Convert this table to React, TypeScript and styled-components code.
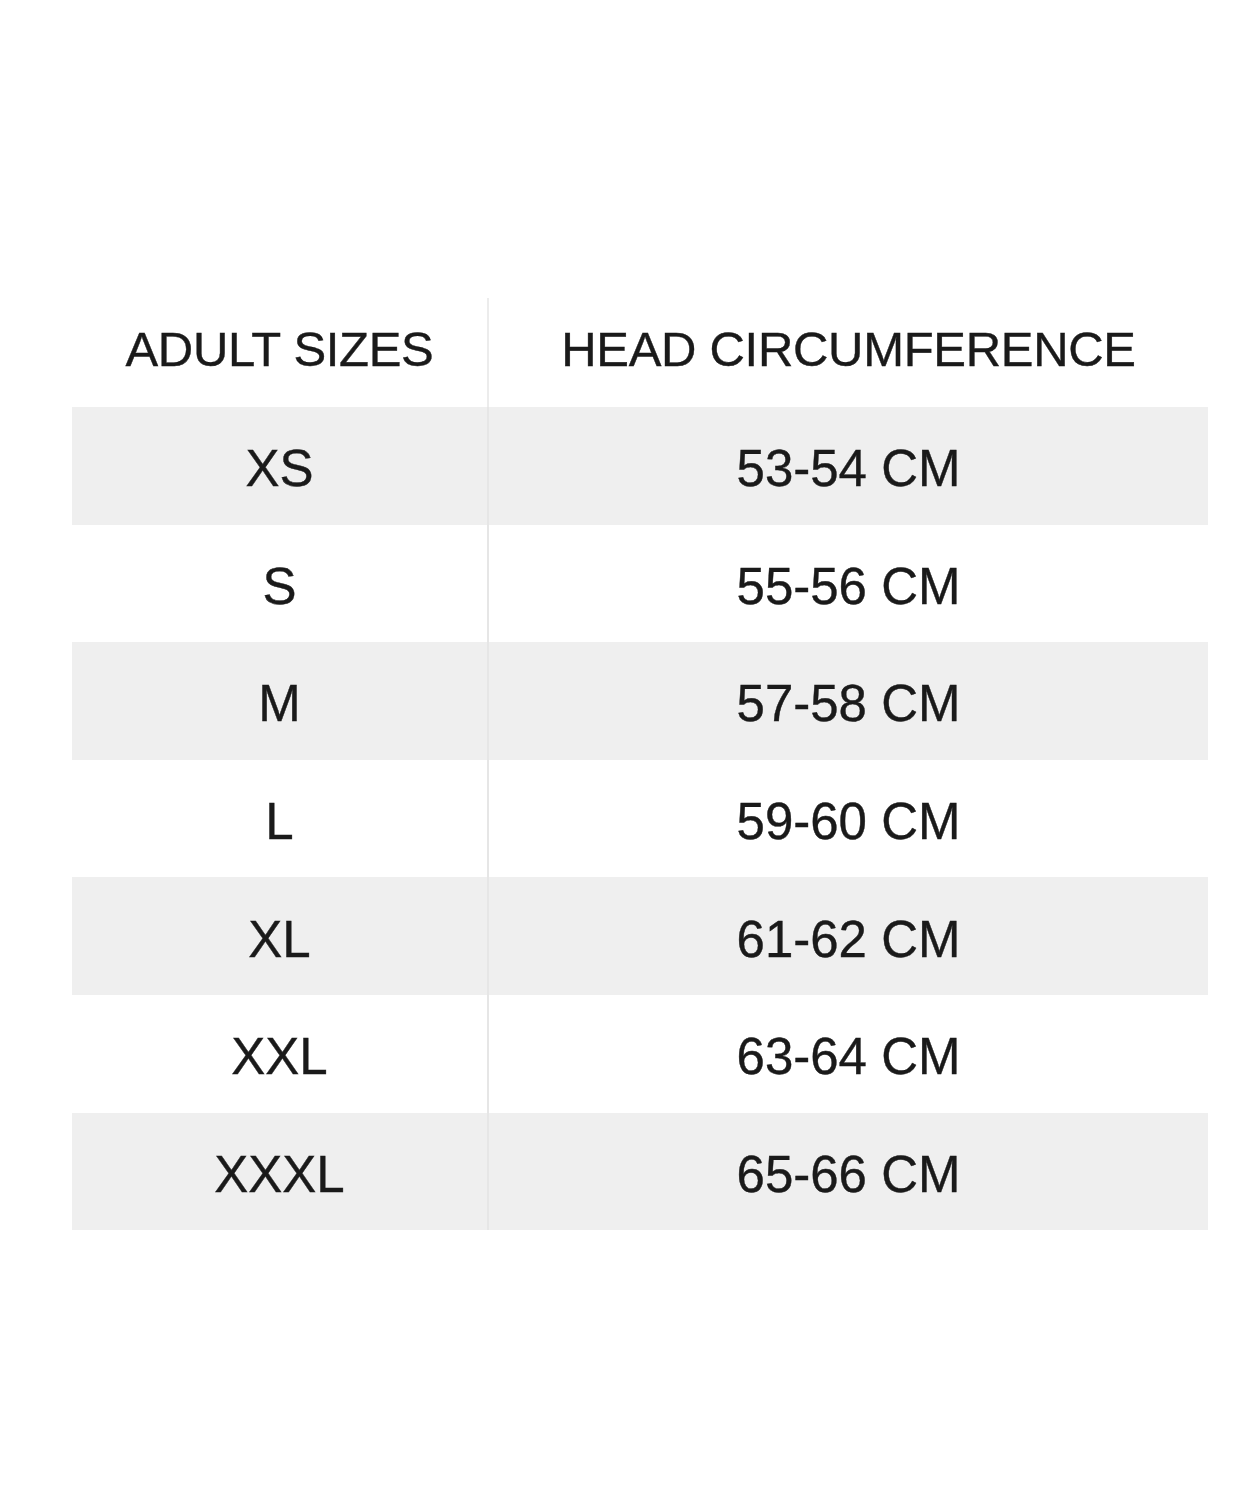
import styled, { createGlobalStyle } from "styled-components";

const GlobalStyle = createGlobalStyle`
  html, body {
    margin: 0;
    padding: 0;
    background: #ffffff;
  }
  body {
    font-family: "Liberation Sans", Arial, sans-serif;
    color: #1a1a1a;
  }
`;

const sizes = [
  { size: "XS", range: "53-54 CM" },
  { size: "S", range: "55-56 CM" },
  { size: "M", range: "57-58 CM" },
  { size: "L", range: "59-60 CM" },
  { size: "XL", range: "61-62 CM" },
  { size: "XXL", range: "63-64 CM" },
  { size: "XXXL", range: "65-66 CM" },
];

const App = () => {
  return (
    <>
      <GlobalStyle />
      <Page>
        <Table>
          <HeadCell>ADULT SIZES</HeadCell>
          <HeadCell divided>HEAD CIRCUMFERENCE</HeadCell>
          {sizes.map(({ size, range }, i) => (
            <Row key={size} shaded={i % 2 === 0}>
              <Cell>{size}</Cell>
              <Cell divided>{range}</Cell>
            </Row>
          ))}
        </Table>
      </Page>
    </>
  );
};

export default App;

const Page = styled.main`
  width: 1250px;
  height: 1500px;
  padding: 298px 42px 0 72px;
  box-sizing: border-box;
`;

const Table = styled.section`
  display: grid;
  grid-template-columns: 415px 1fr;
  width: 1136px;
`;

const HeadCell = styled.div<{ divided?: boolean }>`
  height: 109px;
  display: flex;
  align-items: center;
  justify-content: center;
  padding-bottom: 8px;
  box-sizing: border-box;
  font-size: 49px;
  letter-spacing: -0.3px;
  color: #1a1a1a;
  -webkit-text-stroke: 0.4px #1a1a1a;
  ${({ divided }) => divided && "border-left: 2px solid #ececec;"}
`;

const Row = styled.div<{ shaded: boolean }>`
  display: contents;
  & > div {
    background: ${({ shaded }) => (shaded ? "#efefef" : "#ffffff")};
  }
`;

const Cell = styled.div<{ divided?: boolean }>`
  height: 117.6px;
  display: flex;
  align-items: center;
  justify-content: center;
  padding-top: 6px;
  box-sizing: border-box;
  font-size: 51px;
  letter-spacing: 0;
  color: #1a1a1a;
  -webkit-text-stroke: 0.4px #1a1a1a;
  ${({ divided }) => divided && "border-left: 2px solid #e6e6e6;"}
`;
